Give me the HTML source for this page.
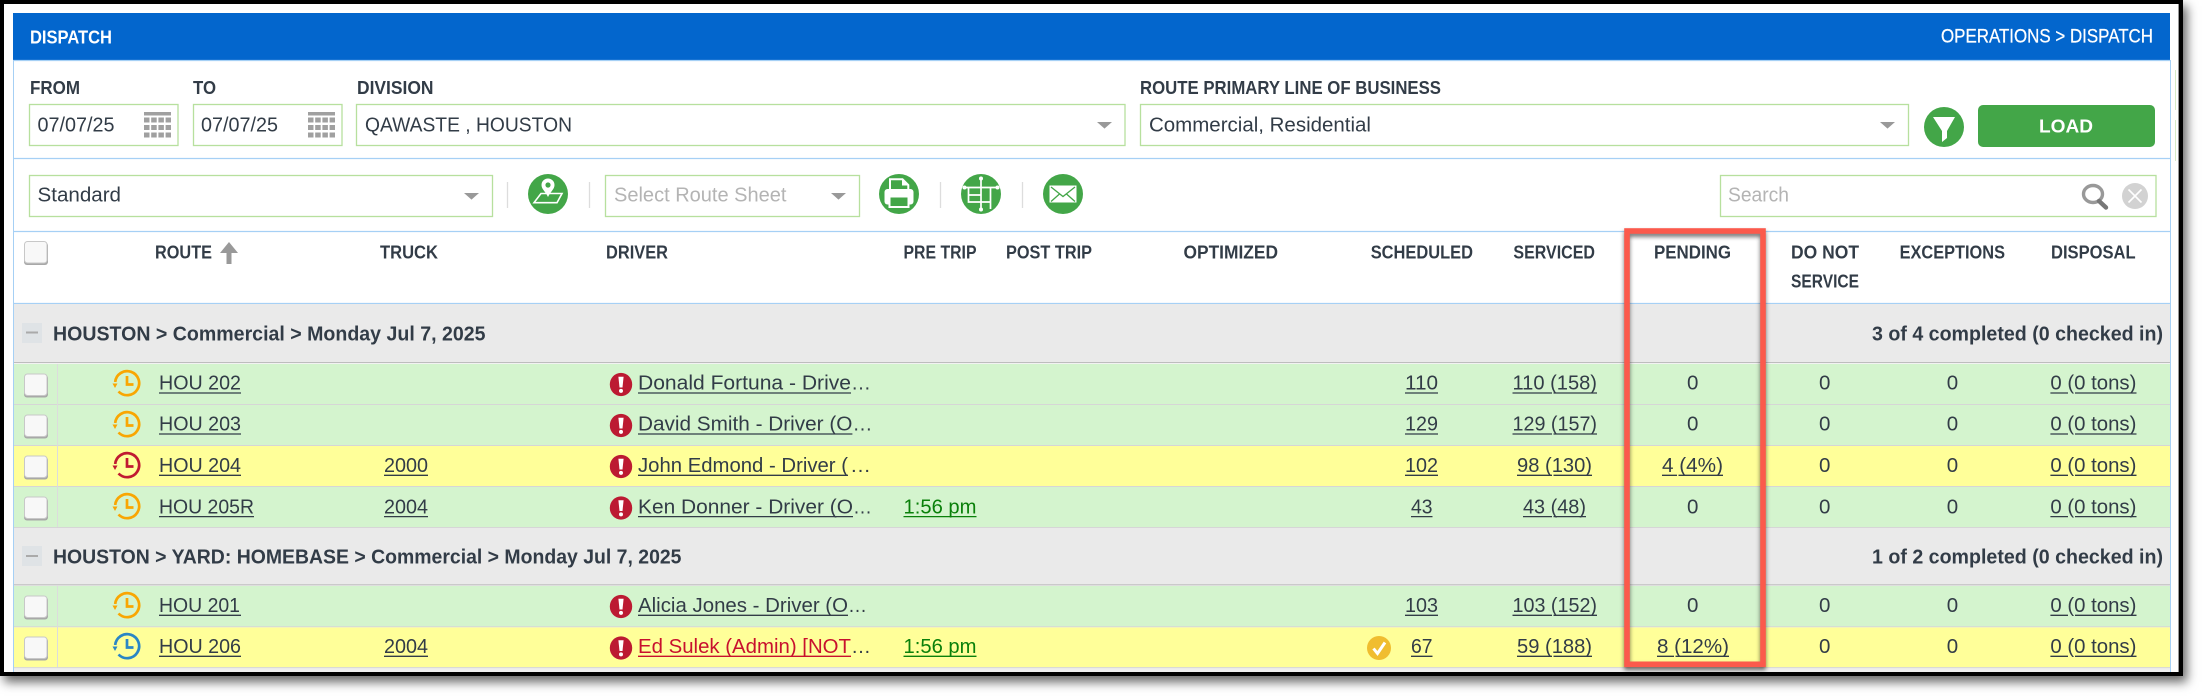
<!DOCTYPE html>
<html lang="en">
<head>
<meta charset="utf-8">
<title>Dispatch</title>
<style>
html,body{margin:0;padding:0;background:#fff;width:2202px;height:696px;overflow:hidden}
#frame{position:absolute;left:0;top:0;width:2183px;height:676px;background:#000;box-shadow:4px 6px 10px rgba(0,0,0,.6)}
svg{position:absolute;left:0;top:0;display:block}
text{font-family:"Liberation Sans",sans-serif;fill:#323c47;font-size:20.5px}
.h{font-weight:bold;font-size:18px}
.g{font-weight:bold;font-size:20.5px}
.w{fill:#fff}
.p{fill:#b4b4b4}
.red{fill:#c8102e}
.grn{fill:#0a800a}
.m{text-anchor:middle}
</style>
</head>
<body>
<div id="frame"></div>
<svg width="2202" height="696" viewBox="0 0 2202 696" xmlns="http://www.w3.org/2000/svg">
<defs>
<g id="cal"><rect width="27" height="3.5" fill="#a0a0a0"/><path d="M0 8H27M0 15.5H27M0 23H27" stroke="#a0a0a0" stroke-width="5" stroke-dasharray="5.5 1.7" fill="none"/></g>
<path id="arr" d="M0 0H15L7.5 6.6Z" fill="#999"/>
<g id="cb"><rect x="0" y="1.5" width="24" height="22.5" rx="3" fill="#a8a8a8"/><rect x="0.5" y="0.5" width="22.5" height="21.5" rx="3" fill="#f8f8f8" stroke="#c8c8c8"/></g>
<g id="clk" fill="none" stroke-width="2.7"><path d="M-11.8-1A12 12 0 1 1-8.5 8.5"/><path d="M0-7V1.5H6.5"/></g>
<g id="ex"><ellipse rx="11.2" ry="11.6" fill="#bc1a32"/><path d="M-2.6-7.8H2.6L1.5 3H-1.5Z" fill="#fff"/><circle cy="6.4" r="2" fill="#fff"/></g>
</defs>

<!-- panel -->
<rect x="4" y="4" width="2174.6" height="668" fill="#fff"/>
<rect x="13" y="13" width="2157" height="47" fill="#0366cd"/>
<path d="M13.5 60V672M2170.5 60V672" stroke="#a6d0f5" stroke-width="1" fill="none"/>
<path d="M13 60.5H2170M13 158.5H2170M13 231.5H2170M13 303.5H2170" stroke="#a6d0f5" stroke-width="1.2" fill="none"/>
<path d="M2175.5 70V110M2175.5 120V161" stroke="#d6ecc8" fill="none"/>

<text class="h w" x="30" y="43.5" textLength="82" lengthAdjust="spacingAndGlyphs">DISPATCH</text>
<text class="w" x="1941" y="42.3" textLength="212" lengthAdjust="spacingAndGlyphs" style="font-size:19px;stroke:#fff;stroke-width:.25">OPERATIONS &gt; DISPATCH</text>

<!-- filter row -->
<text class="h" x="30" y="94" textLength="50" lengthAdjust="spacingAndGlyphs">FROM</text>
<text class="h" x="193" y="94" textLength="23" lengthAdjust="spacingAndGlyphs">TO</text>
<text class="h" x="357" y="94" textLength="76.5" lengthAdjust="spacingAndGlyphs">DIVISION</text>
<text class="h" x="1140" y="94" textLength="301" lengthAdjust="spacingAndGlyphs">ROUTE PRIMARY LINE OF BUSINESS</text>
<g fill="#fff" stroke="#b7e09e" stroke-width="1.3">
<rect x="29.5" y="104.5" width="148.5" height="41"/>
<rect x="193.5" y="104.5" width="148.5" height="41"/>
<rect x="356.5" y="104.5" width="768.5" height="41"/>
<rect x="1140.5" y="104.5" width="768" height="41"/>
<rect x="29.5" y="175.5" width="463" height="41"/>
<rect x="605.5" y="175.5" width="254" height="41"/>
<rect x="1720.5" y="175.5" width="435.5" height="41"/>
</g>
<text x="37.5" y="131.5" textLength="77" lengthAdjust="spacingAndGlyphs">07/07/25</text>
<use href="#cal" x="144" y="112"/>
<text x="201" y="131.5" textLength="77" lengthAdjust="spacingAndGlyphs">07/07/25</text>
<use href="#cal" x="308" y="112"/>
<text x="365" y="131.5" textLength="207" lengthAdjust="spacingAndGlyphs">QAWASTE , HOUSTON</text>
<use href="#arr" x="1097" y="122"/>
<text x="1149" y="131.5" textLength="222" lengthAdjust="spacingAndGlyphs">Commercial, Residential</text>
<use href="#arr" x="1880" y="122"/>

<circle cx="1944" cy="127" r="20" fill="#43a648"/>
<path d="M1933 117H1955L1947 131V138L1942 142V131Z" fill="#fff"/>
<rect x="1978" y="105" width="177" height="42" rx="5" fill="#43a648"/>
<text class="h w" x="2039" y="132.5" textLength="54" lengthAdjust="spacingAndGlyphs">LOAD</text>

<!-- toolbar -->
<text x="37.5" y="201.5" textLength="83.5" lengthAdjust="spacingAndGlyphs">Standard</text>
<use href="#arr" x="464" y="193"/>
<path d="M507.5 182V208M589.5 182V208M940.5 182V208M1022.5 182V208" stroke="#ddd" stroke-width="1.3" fill="none"/>
<text class="p" x="614" y="201.5" textLength="172.5" lengthAdjust="spacingAndGlyphs">Select Route Sheet</text>
<use href="#arr" x="831" y="193"/>

<!-- map icon -->
<g transform="translate(548 194)">
<circle r="20" fill="#43a648"/>
<path d="M-14 8.7H9L14-.5H-7Z" fill="none" stroke="#fff" stroke-width="1.6"/>
<path d="M0 3C-3-3-6.5-5-6.5-9A6.5 6.5 0 1 1 6.5-9C6.5-5 3-3 0 3Z" fill="#fff"/>
<circle cy="-9" r="2.6" fill="#43a648"/>
</g>
<!-- print icon -->
<g transform="translate(899 194)">
<circle r="20" fill="#43a648"/>
<path d="M-9-4V-14.7H3.5L9.3-9V-4" fill="none" stroke="#fff" stroke-width="2"/>
<path d="M3-15V-8.5H9.3Z" fill="#fff"/>
<rect x="-14.5" y="-5" width="29" height="15.5" rx="3" fill="#fff"/>
<rect x="-9.5" y="2.5" width="19" height="10.5" fill="#43a648" stroke="#fff" stroke-width="2"/>
</g>
<!-- table icon -->
<g transform="translate(981 194)">
<circle r="20" fill="#43a648"/>
<path d="M0-15.5V15.5M-16.5-6.5H16.5M-12.5-6.5V8H9.5M9.5-6.5V15M-12.5 1H0" fill="none" stroke="#fff" stroke-width="1.7"/>
<g fill="#fff"><circle cy="-15.5" r="2"/><circle cy="15.5" r="2"/><circle cx="-16.5" cy="-6.5" r="2"/><circle cx="16.5" cy="-6.5" r="2"/></g>
</g>
<!-- mail icon -->
<g transform="translate(1063 194)">
<circle r="20" fill="#43a648"/>
<rect x="-13.5" y="-8.5" width="27" height="17" fill="#fff"/>
<path d="M-12-7L0 2.5L12-7M-12 7.5L-3.5 0M12 7.5L3.5 0" fill="none" stroke="#43a648" stroke-width="1.3"/>
</g>

<text class="p" x="1728" y="201.5" textLength="61" lengthAdjust="spacingAndGlyphs">Search</text>
<ellipse cx="2093" cy="194" rx="9.5" ry="8.5" fill="none" stroke="#999" stroke-width="3.4"/>
<path d="M2099 201L2106 207.5" stroke="#777" stroke-width="4.4" stroke-linecap="round"/>
<circle cx="2135" cy="196" r="13" fill="#d2d2d2"/>
<path d="M2128.5 189.5L2141.5 202.5M2141.5 189.5L2128.5 202.5" stroke="#fff" stroke-width="1.6"/>

<!-- header -->
<use href="#cb" x="24" y="241"/>
<text class="h" x="155" y="258.7" textLength="57" lengthAdjust="spacingAndGlyphs">ROUTE</text>
<path d="M229 242L220 253H226.5V264H231.5V253H238Z" fill="#999"/>
<text class="h" x="380" y="258.7" textLength="58" lengthAdjust="spacingAndGlyphs">TRUCK</text>
<text class="h" x="606" y="258.7" textLength="62" lengthAdjust="spacingAndGlyphs">DRIVER</text>
<text class="h" x="903.5" y="258.7" textLength="73" lengthAdjust="spacingAndGlyphs">PRE TRIP</text>
<text class="h" x="1006" y="258.7" textLength="86" lengthAdjust="spacingAndGlyphs">POST TRIP</text>
<text class="h" x="1183.5" y="258.7" textLength="94.5" lengthAdjust="spacingAndGlyphs">OPTIMIZED</text>
<text class="h" x="1370.7" y="258.7" textLength="102.3" lengthAdjust="spacingAndGlyphs">SCHEDULED</text>
<text class="h" x="1513.4" y="258.7" textLength="81.6" lengthAdjust="spacingAndGlyphs">SERVICED</text>
<text class="h" x="1654" y="258.7" textLength="77" lengthAdjust="spacingAndGlyphs">PENDING</text>
<text class="h" x="1791" y="258.7" textLength="68" lengthAdjust="spacingAndGlyphs">DO NOT</text>
<text class="h" x="1791" y="287.7" textLength="68" lengthAdjust="spacingAndGlyphs">SERVICE</text>
<text class="h" x="1899.6" y="258.7" textLength="105.4" lengthAdjust="spacingAndGlyphs">EXCEPTIONS</text>
<text class="h" x="2051" y="258.7" textLength="84.6" lengthAdjust="spacingAndGlyphs">DISPOSAL</text>

<!-- group & row backgrounds -->
<rect x="14" y="304" width="2156" height="58" fill="#eaeaea"/>
<rect x="14" y="362" width="2156" height="1.2" fill="#bdbdbd"/>
<rect x="14" y="364" width="2156" height="40" fill="#d4f4ce"/>
<rect x="14" y="405" width="2156" height="40" fill="#d4f4ce"/>
<rect x="14" y="446" width="2156" height="40" fill="#ffff99"/>
<rect x="14" y="487" width="2156" height="40" fill="#d4f4ce"/>
<rect x="14" y="528" width="2156" height="56.5" fill="#eaeaea"/>
<rect x="14" y="584.3" width="2156" height="1.2" fill="#bdbdbd"/>
<rect x="14" y="586" width="2156" height="40.5" fill="#d4f4ce"/>
<rect x="14" y="627.3" width="2156" height="40" fill="#ffff99"/>
<rect x="14" y="668" width="2156" height="4" fill="#eeeeee"/>
<path d="M14 404.5H2170M14 445.5H2170M14 486.5H2170M14 527.5H2170M14 626.8H2170M14 667.6H2170" stroke="#d6d6d6" fill="none"/>
<path d="M57.5 364V527M57.5 586V667" stroke="#dcdcdc" fill="none"/>

<!-- group 1 -->
<rect x="22" y="323" width="20" height="20" fill="#dfe3e6"/>
<rect x="26" y="331.5" width="12" height="2" fill="#aaa"/>
<text class="g" x="53" y="340.3" textLength="432.5" lengthAdjust="spacingAndGlyphs">HOUSTON &gt; Commercial &gt; Monday Jul 7, 2025</text>
<text class="g" x="1872" y="340.3" textLength="291" lengthAdjust="spacingAndGlyphs">3 of 4 completed (0 checked in)</text>
<!-- group 2 -->
<rect x="22" y="546" width="20" height="20" fill="#dfe3e6"/>
<rect x="26" y="555" width="12" height="2" fill="#aaa"/>
<text class="g" x="53" y="563.5" textLength="628.5" lengthAdjust="spacingAndGlyphs">HOUSTON &gt; YARD: HOMEBASE &gt; Commercial &gt; Monday Jul 7, 2025</text>
<text class="g" x="1872" y="563.5" textLength="291" lengthAdjust="spacingAndGlyphs">1 of 2 completed (0 checked in)</text>

<!-- checkboxes -->
<use href="#cb" x="24" y="373.5"/>
<use href="#cb" x="24" y="414.5"/>
<use href="#cb" x="24" y="455.5"/>
<use href="#cb" x="24" y="496.5"/>
<use href="#cb" x="24" y="595.5"/>
<use href="#cb" x="24" y="636.5"/>

<!-- clocks -->
<g stroke="#f9a602"><use href="#clk" x="127" y="383"/><use href="#clk" x="127" y="424"/><use href="#clk" x="127" y="506"/><use href="#clk" x="127" y="605"/></g>
<use href="#clk" x="127" y="465" stroke="#c01a32"/>
<use href="#clk" x="127" y="646" stroke="#2b86c5"/>
<g fill="#f9a602"><path d="M112.5 383.5H117.5L115 388ZM112.5 424.5H117.5L115 429ZM112.5 506.5H117.5L115 511ZM112.5 605.5H117.5L115 610Z"/></g>
<path d="M112.5 465.5H117.5L115 470Z" fill="#c01a32"/>
<path d="M112.5 646.5H117.5L115 651Z" fill="#2b86c5"/>

<!-- exclamation -->
<use href="#ex" x="621" y="384.5"/>
<use href="#ex" x="621" y="425.5"/>
<use href="#ex" x="621" y="466.5"/>
<use href="#ex" x="621" y="508"/>
<use href="#ex" x="621" y="606.5"/>
<use href="#ex" x="621" y="648"/>

<!-- underlines -->
<path stroke="#323c47" stroke-width="1.3" fill="none" d="
M159 393H241M159 434H241M159 475.3H241M159 516.6H254M159 615.3H241M159 656.3H241
M384 475.3H428M384 516.6H428M384 656.3H428
M638 393H851M638 434H852.4M638 475.3H848M638 516.6H853M638 615.3H848
M1405 393H1438M1405 434H1438M1405 475.3H1438M1411 516.6H1432.5M1405 615.3H1438M1411 656.3H1432.5
M1512.5 393H1552M1553.5 393H1597M1512.5 434H1552M1553.5 434H1597M1517 475.3H1552M1553.5 475.3H1592M1523 516.6H1552M1553.5 516.6H1586M1512.5 615.3H1552M1553.5 615.3H1597M1517 656.3H1552M1553.5 656.3H1592
M1662 475.3H1677M1678.5 475.3H1723M1657 656.3H1674M1675.5 656.3H1729
M2050.4 393H2068M2075 393H2136.5M2050.4 434H2068M2075 434H2136.5M2050.4 475.3H2068M2075 475.3H2136.5M2050.4 516.6H2068M2075 516.6H2136.5M2050.4 615.3H2068M2075 615.3H2136.5M2050.4 656.3H2068M2075 656.3H2136.5"/>
<path stroke="#c8102e" stroke-width="1.3" fill="none" d="M638 656.3H851"/>
<path stroke="#0a800a" stroke-width="1.3" fill="none" d="M903.5 516.6H976.5M903.5 656.3H976.5"/>

<!-- row 1 -->
<text x="159" y="389.7" textLength="82" lengthAdjust="spacingAndGlyphs">HOU 202</text>
<text x="638" y="389.7" textLength="213" lengthAdjust="spacingAndGlyphs">Donald Fortuna - Drive</text><text x="851" y="389.7" textLength="20" lengthAdjust="spacingAndGlyphs">…</text>
<text x="1405" y="389.7" textLength="33" lengthAdjust="spacingAndGlyphs">110</text>
<text x="1512.5" y="389.7" textLength="84.5" lengthAdjust="spacingAndGlyphs">110 (158)</text>
<text class="m" x="1692.7" y="389.7">0</text><text class="m" x="1824.7" y="389.7">0</text><text class="m" x="1952.5" y="389.7">0</text>
<text x="2050.4" y="389.7" textLength="86" lengthAdjust="spacingAndGlyphs">0 (0 tons)</text>
<!-- row 2 -->
<text x="159" y="430.7" textLength="82" lengthAdjust="spacingAndGlyphs">HOU 203</text>
<text x="638" y="430.7" textLength="214.4" lengthAdjust="spacingAndGlyphs">David Smith - Driver (O</text><text x="852.5" y="430.7" textLength="20" lengthAdjust="spacingAndGlyphs">…</text>
<text x="1405" y="430.7" textLength="33" lengthAdjust="spacingAndGlyphs">129</text>
<text x="1512.5" y="430.7" textLength="84.5" lengthAdjust="spacingAndGlyphs">129 (157)</text>
<text class="m" x="1692.7" y="430.7">0</text><text class="m" x="1824.7" y="430.7">0</text><text class="m" x="1952.5" y="430.7">0</text>
<text x="2050.4" y="430.7" textLength="86" lengthAdjust="spacingAndGlyphs">0 (0 tons)</text>
<!-- row 3 -->
<text x="159" y="471.9" textLength="82" lengthAdjust="spacingAndGlyphs">HOU 204</text>
<text x="384" y="471.9" textLength="44" lengthAdjust="spacingAndGlyphs">2000</text>
<text x="638" y="471.9" textLength="210" lengthAdjust="spacingAndGlyphs">John Edmond - Driver (</text><text x="850" y="471.9" textLength="21" lengthAdjust="spacingAndGlyphs">…</text>
<text x="1405" y="471.9" textLength="33" lengthAdjust="spacingAndGlyphs">102</text>
<text x="1517" y="471.9" textLength="75" lengthAdjust="spacingAndGlyphs">98 (130)</text>
<text x="1662" y="471.9" textLength="61" lengthAdjust="spacingAndGlyphs">4 (4%)</text>
<text class="m" x="1824.7" y="471.9">0</text><text class="m" x="1952.5" y="471.9">0</text>
<text x="2050.4" y="471.9" textLength="86" lengthAdjust="spacingAndGlyphs">0 (0 tons)</text>
<!-- row 4 -->
<text x="159" y="513.3" textLength="95" lengthAdjust="spacingAndGlyphs">HOU 205R</text>
<text x="384" y="513.3" textLength="44" lengthAdjust="spacingAndGlyphs">2004</text>
<text x="638" y="513.3" textLength="215" lengthAdjust="spacingAndGlyphs">Ken Donner - Driver (O</text><text x="853" y="513.3" textLength="19" lengthAdjust="spacingAndGlyphs">…</text>
<text class="grn" x="903.5" y="513.3" textLength="73" lengthAdjust="spacingAndGlyphs">1:56 pm</text>
<text x="1411" y="513.3" textLength="21.5" lengthAdjust="spacingAndGlyphs">43</text>
<text x="1523" y="513.3" textLength="63" lengthAdjust="spacingAndGlyphs">43 (48)</text>
<text class="m" x="1692.7" y="513.3">0</text><text class="m" x="1824.7" y="513.3">0</text><text class="m" x="1952.5" y="513.3">0</text>
<text x="2050.4" y="513.3" textLength="86" lengthAdjust="spacingAndGlyphs">0 (0 tons)</text>
<!-- row 5 -->
<text x="159" y="612" textLength="81" lengthAdjust="spacingAndGlyphs">HOU 201</text>
<text x="638" y="612" textLength="210" lengthAdjust="spacingAndGlyphs">Alicia Jones - Driver (O</text><text x="848" y="612" textLength="19" lengthAdjust="spacingAndGlyphs">…</text>
<text x="1405" y="612" textLength="33" lengthAdjust="spacingAndGlyphs">103</text>
<text x="1512.5" y="612" textLength="84.5" lengthAdjust="spacingAndGlyphs">103 (152)</text>
<text class="m" x="1692.7" y="612">0</text><text class="m" x="1824.7" y="612">0</text><text class="m" x="1952.5" y="612">0</text>
<text x="2050.4" y="612" textLength="86" lengthAdjust="spacingAndGlyphs">0 (0 tons)</text>
<!-- row 6 -->
<text x="159" y="653" textLength="82" lengthAdjust="spacingAndGlyphs">HOU 206</text>
<text x="384" y="653" textLength="44" lengthAdjust="spacingAndGlyphs">2004</text>
<text class="red" x="638" y="653" textLength="213" lengthAdjust="spacingAndGlyphs">Ed Sulek (Admin) [NOT</text><text x="851" y="653" textLength="20" lengthAdjust="spacingAndGlyphs">…</text>
<text class="grn" x="903.5" y="653" textLength="73" lengthAdjust="spacingAndGlyphs">1:56 pm</text>
<ellipse cx="1379" cy="648" rx="12" ry="12" fill="#f0bd2f"/>
<path d="M1373.5 648.5L1377.5 653.5L1385 642.5" fill="none" stroke="#fff" stroke-width="3"/>
<text x="1411" y="653" textLength="21.5" lengthAdjust="spacingAndGlyphs">67</text>
<text x="1517" y="653" textLength="75" lengthAdjust="spacingAndGlyphs">59 (188)</text>
<text x="1657" y="653" textLength="72" lengthAdjust="spacingAndGlyphs">8 (12%)</text>
<text class="m" x="1824.7" y="653">0</text><text class="m" x="1952.5" y="653">0</text>
<text x="2050.4" y="653" textLength="86" lengthAdjust="spacingAndGlyphs">0 (0 tons)</text>

<!-- red highlight -->
<rect x="1627" y="231" width="136" height="433.3" fill="none" stroke="#fb5a4c" stroke-width="5.6" style="filter:drop-shadow(0 3px 2px rgba(0,0,0,.55))"/>
</svg>
</body>
</html>
